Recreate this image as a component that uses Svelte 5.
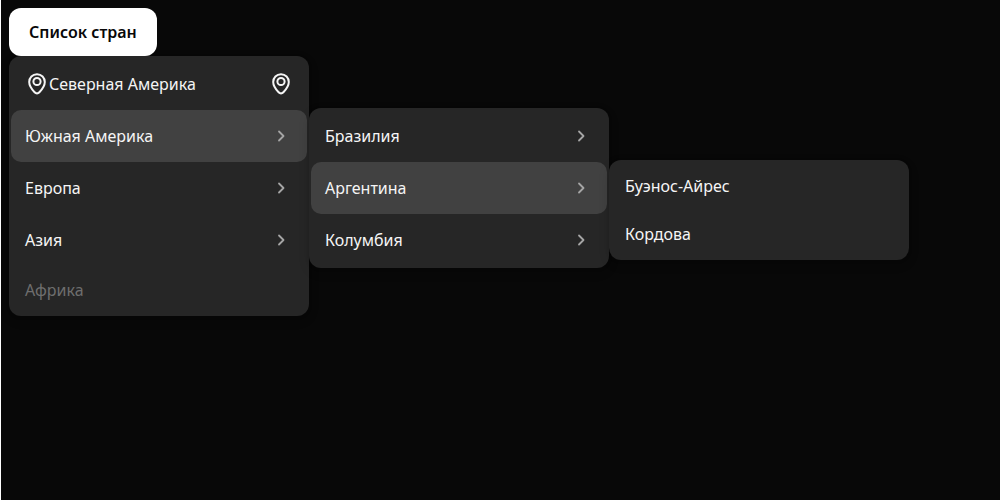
<script>
  const countries = [
    { label: 'Северная Америка', pin: true },
    {
      label: 'Южная Америка',
      open: true,
      items: [
        { label: 'Бразилия', items: [] },
        {
          label: 'Аргентина',
          open: true,
          items: [{ label: 'Буэнос-Айрес' }, { label: 'Кордова' }]
        },
        { label: 'Колумбия', items: [] }
      ]
    },
    { label: 'Европа', items: [] },
    { label: 'Азия', items: [] },
    { label: 'Африка', disabled: true }
  ];
</script>

{#snippet pin()}
  <svg class="icon" viewBox="0 0 24 24" aria-hidden="true">
    <path d="M12 2.200c4.500 0 7.800 3.400 7.800 7.800 0 3.600-2.200 6.900-5.400 10.300-1.400 1.500-3.400 1.500-4.800 0C6.400 16.900 4.200 13.600 4.200 10c0-4.400 3.300-7.800 7.800-7.800z" />
    <circle cx="12" cy="9.500" r="3.600" />
  </svg>
{/snippet}

{#snippet menu(items, nested)}
  <ul class="menu" class:nested role="menu">
    {#each items as item}
      <li role="none">
        <button
          class="item"
          class:tall={item.pin || item.items}
          class:active={item.open}
          type="button"
          role="menuitem"
          disabled={item.disabled}
          aria-haspopup={item.items ? 'menu' : undefined}
          aria-expanded={item.items ? !!item.open : undefined}
        >
          {#if item.pin}{@render pin()}{/if}
          <span class="label">{item.label}</span>
          {#if item.pin}{@render pin()}{/if}
          {#if item.items}
            <svg class="icon chevron" viewBox="0 0 24 24" aria-hidden="true">
              <path d="M10 7.500l4.500 4.500-4.500 4.500" />
            </svg>
          {/if}
        </button>
        {#if item.open}{@render menu(item.items, true)}{/if}
      </li>
    {/each}
  </ul>
{/snippet}

<main>
  <div class="dropdown">
    <button class="trigger" type="button" aria-haspopup="menu" aria-expanded="true">Список стран</button>
    {@render menu(countries, false)}
  </div>
</main>

<style>
  :global(body) {
    background: #080808;
  }
  main {
    min-height: 100vh;
    box-sizing: border-box;
    padding: 8px;
    border-left: 1px solid #fff;
    font-family: 'Noto Sans', 'Open Sans', sans-serif;
    font-size: 16px;
    line-height: 24px;
  }
  .dropdown {
    width: 300px;
  }
  button {
    border: 0;
    margin: 0;
    font: inherit;
    cursor: pointer;
  }
  .trigger {
    position: relative;
    display: block;
    height: 48px;
    padding: 0 20px;
    border-radius: 12px;
    background: #fff;
    color: #080808;
    font-weight: 600;
  }
  .menu {
    box-sizing: border-box;
    width: 300px;
    margin: 0;
    padding: 2px;
    list-style: none;
    border-radius: 12px;
    background: #262626;
    box-shadow: 0 4px 14px -4px rgba(0, 0, 0, 0.3), 0 1px 4px -1px rgba(0, 0, 0, 0.2);
  }
  li {
    position: relative;
  }
  .nested {
    position: absolute;
    top: -2px;
    left: calc(100% + 2px);
  }
  .item {
    display: flex;
    align-items: center;
    width: 100%;
    min-height: 48px;
    padding: 0 14px;
    border-radius: 10px;
    background: transparent;
    color: #f5f5f5;
    text-align: left;
  }
  .tall {
    min-height: 52px;
  }
  .active {
    background: #414141;
  }
  .item:disabled {
    color: #6e6e6e;
    cursor: default;
  }
  .label {
    flex: 1;
  }
  .icon {
    flex: none;
    width: 24px;
    height: 24px;
    fill: none;
    stroke: currentColor;
    stroke-width: 2;
    stroke-linecap: round;
    stroke-linejoin: round;
  }
  .chevron {
    color: #a5a5a5;
    stroke-width: 1.8;
  }
</style>
